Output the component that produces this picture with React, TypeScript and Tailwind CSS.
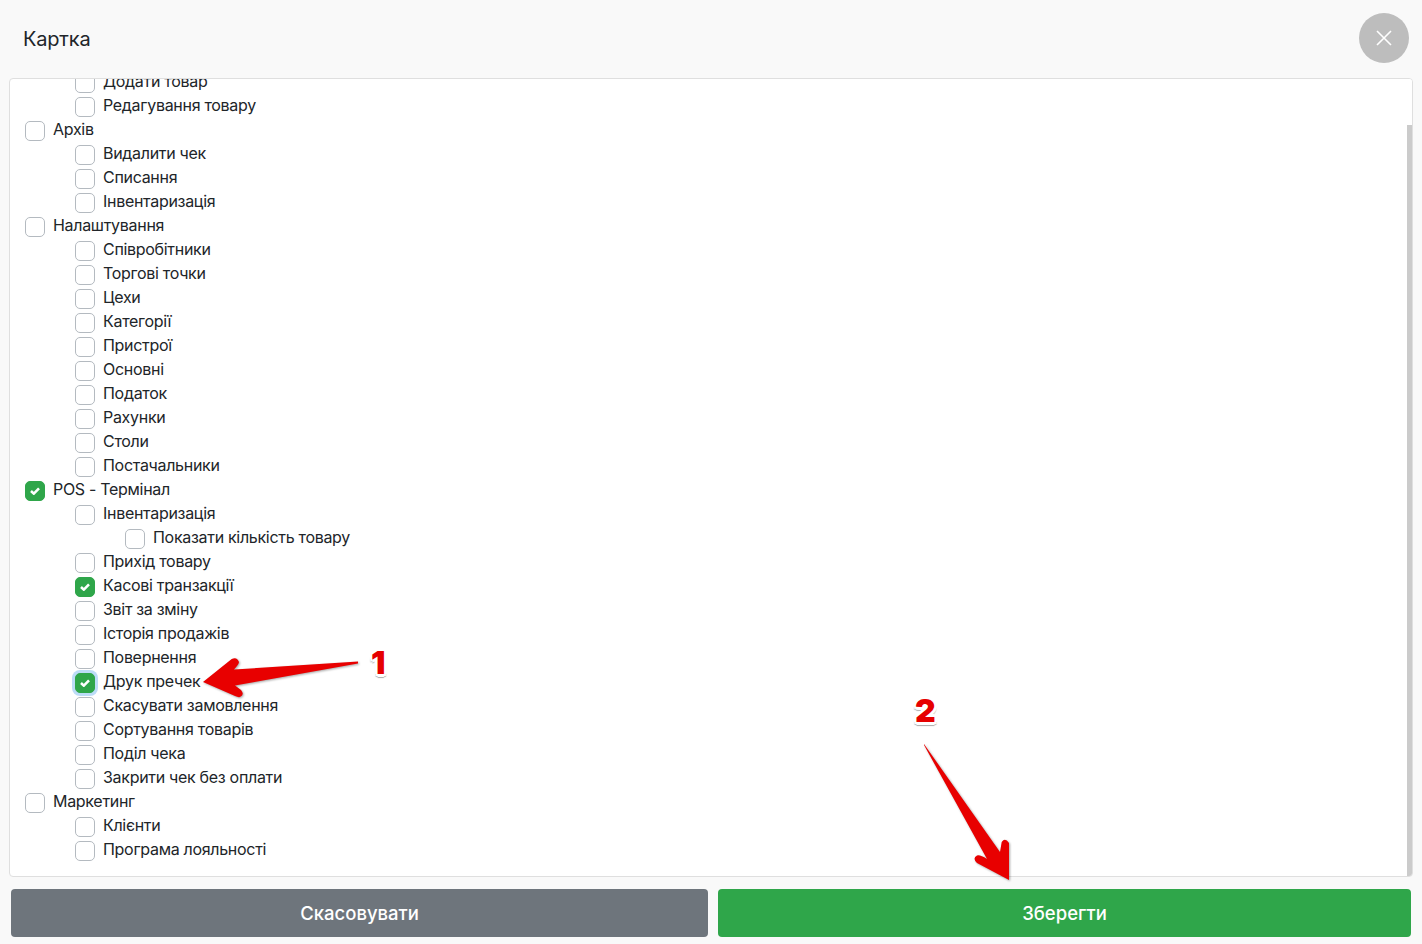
const rows: [number, string, boolean?, boolean?][] = [
  [1, "Додати товар"],
  [1, "Редагування товару"],
  [0, "Архів"],
  [1, "Видалити чек"],
  [1, "Списання"],
  [1, "Інвентаризація"],
  [0, "Налаштування"],
  [1, "Співробітники"],
  [1, "Торгові точки"],
  [1, "Цехи"],
  [1, "Категорії"],
  [1, "Пристрої"],
  [1, "Основні"],
  [1, "Податок"],
  [1, "Рахунки"],
  [1, "Столи"],
  [1, "Постачальники"],
  [0, "POS - Термінал", true],
  [1, "Інвентаризація"],
  [2, "Показати кількість товару"],
  [1, "Прихід товару"],
  [1, "Касові транзакції", true],
  [1, "Звіт за зміну"],
  [1, "Історія продажів"],
  [1, "Повернення"],
  [1, "Друк пречек", true, true],
  [1, "Скасувати замовлення"],
  [1, "Сортування товарів"],
  [1, "Поділ чека"],
  [1, "Закрити чек без оплати"],
  [0, "Маркетинг"],
  [1, "Клієнти"],
  [1, "Програма лояльності"],
];

const indents = ["pl-[15px]", "pl-[65px]", "pl-[115px]"];

function Row({ level, label, checked, focused }: { level: number; label: string; checked?: boolean; focused?: boolean }) {
  return (
    <div className={`flex h-6 items-center gap-2 ${indents[level]}`}>
      <span
        className={`mt-1 flex h-5 w-5 shrink-0 items-center justify-center rounded-[5px] border ${
          checked ? "border-[#2fa64a] bg-[#2fa64a]" : "border-[#b4bac0] bg-white"
        } ${focused ? "shadow-[0_0_0_3px_#bcdcf7]" : ""}`}
      >
        {checked && (
          <svg width="10" height="8" viewBox="0 0 10 8" fill="none">
            <path d="M1 4 L3.8 6.6 L9 1.4" stroke="white" strokeWidth="2.6" />
          </svg>
        )}
      </span>
      <span className="whitespace-nowrap">{label}</span>
    </div>
  );
}

export default function App() {
  return (
    <div className="relative flex h-[944px] w-[1422px] flex-col overflow-hidden bg-[#f9f9f9] font-['Inter','Liberation_Sans',sans-serif] text-[#212529]">
      <header className="flex h-[78px] shrink-0 items-center justify-between pl-[23px] pr-[13px]">
        <h1 className="text-xl font-normal tracking-[-0.2px]">Картка</h1>
        <button className="mb-[2px] flex h-[50px] w-[50px] items-center justify-center rounded-full bg-[#bdbdbd]">
          <svg width="16" height="16" viewBox="0 0 16 16" fill="none">
            <path d="M1 1 L15 15 M15 1 L1 15" stroke="white" strokeWidth="1.6" />
          </svg>
        </button>
      </header>

      <div className="ml-[9px] mr-[9px] flex h-[799px] shrink-0 overflow-hidden rounded-[4px] border border-[#dfdfdf] bg-white">
        <div className="min-w-0 flex-1 overflow-hidden text-base tracking-[-0.3px]">
          <div className="-mt-[10px]">
            {rows.map(([level, label, checked, focused], i) => (
              <Row key={i} level={level} label={label} checked={checked} focused={focused} />
            ))}
          </div>
        </div>
        <div className="flex w-[5px] shrink-0 flex-col">
          <div className="h-[46px] shrink-0 bg-white" />
          <div className="flex-1 bg-[#cbcbcb]" />
        </div>
      </div>

      <footer className="flex gap-[10px] pl-[11px] pr-[11px] pt-3">
        <button className="h-12 w-[697px] rounded-[4px] bg-[#6e757c] pt-0.5 text-[18.5px] font-medium text-white">Скасовувати</button>
        <button className="h-12 flex-1 rounded-[4px] bg-[#2fa64a] pt-0.5 text-[18.5px] font-medium text-white">Зберегти</button>
      </footer>

      {/* annotation arrows */}
      <svg className="absolute left-0 top-0 drop-shadow-[1px_1px_1px_rgba(0,0,0,0.35)]" width="1422" height="944" viewBox="0 0 1422 944" fill="none">
        <path d="M203 682 L231.7 659 Q237 656.5 239 662 Q239 664 234 669.5 L358 661.5 L358 663.5 L235 685.5 L241 690 Q245 695 240 697 Q238 697.5 235 696 Z" fill="#e80000" />
        <path d="M924 744 L1000 852 L1001.7 842 Q1005 837 1009 843 L1009 880 L977 863 Q972 858 977 855.5 Q980 854.5 987 859 L924 745 Z" fill="#e80000" />
      </svg>
      <span className="absolute left-[371px] top-[643px] text-[32px] font-black leading-[40px] text-[#e60000] [text-shadow:-3px_0_0_#fff,3px_0_0_#fff,0_-3px_0_#fff,0_3px_0_#fff,-2px_-2px_0_#fff,2px_-2px_0_#fff,-2px_2px_0_#fff,2px_2px_0_#fff,-2px_3px_1px_#bbb,2px_3px_1px_#bbb,0_4px_1px_#aaa]">1</span>
      <span className="absolute left-[915px] top-[691px] text-[32px] font-black leading-[40px] text-[#e60000] [text-shadow:-3px_0_0_#fff,3px_0_0_#fff,0_-3px_0_#fff,0_3px_0_#fff,-2px_-2px_0_#fff,2px_-2px_0_#fff,-2px_2px_0_#fff,2px_2px_0_#fff,-2px_3px_1px_#bbb,2px_3px_1px_#bbb,0_4px_1px_#aaa]">2</span>
    </div>
  );
}
